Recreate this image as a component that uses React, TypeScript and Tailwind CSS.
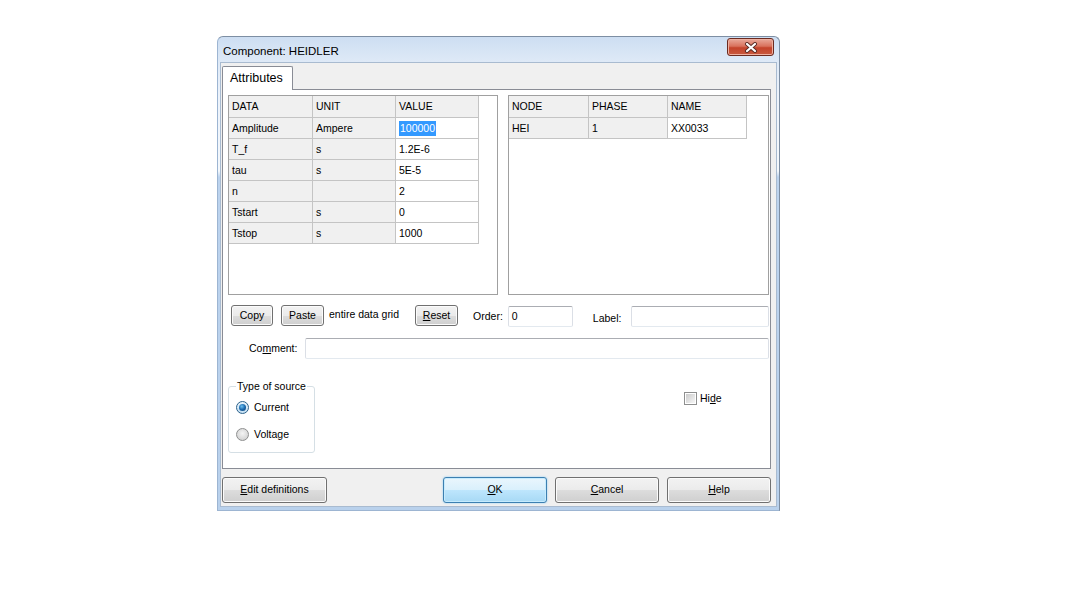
import React from "react";

// Win7 classic button look, reused by every push button in the dialog
const btn =
  "flex items-center justify-center rounded-[3px] border border-[#707070] bg-[linear-gradient(180deg,#f2f2f2_0%,#ebebeb_50%,#dddddd_50%,#cfcfcf_100%)] shadow-[inset_0_0_0_1px_#fbfbfb] text-black";
const btnDefault =
  "flex items-center justify-center rounded-[3px] border border-[#3c7fb1] bg-[linear-gradient(180deg,#eaf6fd_0%,#d9f0fc_50%,#bee6fd_50%,#a7d9f5_100%)] shadow-[inset_0_0_0_1px_#c6ebfd,0_0_2px_#7fc9f5] text-black";
const input =
  "h-[21px] rounded-[2px] border border-[#abadb3] border-x-[#dbdfe6] border-b-[#e3e9ef] bg-white";

const dataRows = [
  ["Amplitude", "Ampere", "100000"],
  ["T_f", "s", "1.2E-6"],
  ["tau", "s", "5E-5"],
  ["n", "", "2"],
  ["Tstart", "s", "0"],
  ["Tstop", "s", "1000"],
];

function Cell({ children, white, head }: { children?: React.ReactNode; white?: boolean; head?: boolean }) {
  const h = head ? "h-[22px]" : "h-[21px]";
  return (
    <div
      className={
        white
          ? `flex ${h} items-center border-r border-b border-[#c4c4c4] bg-white pl-[3px] pt-[1px]`
          : `flex ${h} items-center border-r border-b border-[#c4c4c4] bg-[#f0f0f0] pl-[3px] pt-[1px]`
      }
    >
      {children}
    </div>
  );
}

function CloseGlyph() {
  return (
    <svg width="14" height="11" viewBox="0 0 14 11">
      <path d="M3 2 L11 9 M11 2 L3 9" stroke="#5a2b24" strokeWidth="4" strokeLinecap="round" />
      <path d="M3 2 L11 9 M11 2 L3 9" stroke="#ffffff" strokeWidth="2.2" strokeLinecap="round" />
    </svg>
  );
}

export default function App() {
  return (
    <div className="h-[591px] w-[1081px] bg-white pl-[217px] pt-[36px] font-['Liberation_Sans',Arial,sans-serif] text-[10.5px] text-black">
      {/* window frame */}
      <div className="flex h-[475px] w-[563px] flex-col rounded-t-[6px] border border-[#7d8ea3] border-b-[#9db5d2] border-l-[#9db5d2] bg-[linear-gradient(180deg,#cddef2_0px,#dfeaf7_26px,#edf3fb_60px,#f4f8fc_134px,#bcd3ee_140px,#b9d1ec_100%)] px-[2px] pb-[3px]">
        {/* title bar */}
        <div className="flex h-[25px] items-start justify-between">
          <span className="pl-[3px] pt-[7px] text-[11.5px] leading-[14px]">Component: HEIDLER</span>
          <div className="mr-[3px] mt-[1px] flex h-[18px] w-[47px] items-center justify-center rounded-[3px] border border-[#6b2b20] bg-[linear-gradient(180deg,#e9a99a_0%,#d9725d_45%,#c4432b_55%,#c85a3f_100%)] shadow-[inset_0_0_0_1px_#eeb0a0]">
            <CloseGlyph />
          </div>
        </div>

        {/* client area */}
        <div className="flex flex-1 flex-col border border-[#a9bbd0] bg-[#f0f0f0]">
          {/* tab strip */}
          <div className="ml-[1px] mt-[3px] flex">
            <div className="relative z-10 -mb-px flex h-[24px] w-[71px] items-center rounded-t-[2px] border border-b-0 border-[#898c95] bg-white pl-[7px] text-[12.5px]">
              Attributes
            </div>
          </div>

          {/* tab page */}
          <div className="ml-[1px] flex h-[380px] w-[549px] flex-col border border-[#898c95] bg-white">
            {/* grids */}
            <div className="ml-[5px] mt-[5px] flex gap-[10px]">
              <div className="h-[200px] w-[270px] border border-[#a0a0a0] bg-white">
                <div className="grid w-fit grid-cols-[84px_83px_83px]">
                  <Cell head>DATA</Cell>
                  <Cell head>UNIT</Cell>
                  <Cell head>VALUE</Cell>
                  {dataRows.map((r, i) => (
                    <React.Fragment key={r[0]}>
                      <Cell>{r[0]}</Cell>
                      <Cell>{r[1]}</Cell>
                      <Cell white>
                        {i === 0 ? (
                          <span className="bg-[#3399ff] px-[1px] text-white">{r[2]}</span>
                        ) : (
                          r[2]
                        )}
                      </Cell>
                    </React.Fragment>
                  ))}
                </div>
              </div>
              <div className="h-[200px] w-[261px] border border-[#a0a0a0] bg-white">
                <div className="grid w-fit grid-cols-[80px_79px_79px]">
                  <Cell head>NODE</Cell>
                  <Cell head>PHASE</Cell>
                  <Cell head>NAME</Cell>
                  <Cell>HEI</Cell>
                  <Cell>1</Cell>
                  <Cell white>XX0033</Cell>
                </div>
              </div>
            </div>

            {/* copy / paste / order / label */}
            <div className="ml-[8px] mt-[10px] flex items-start">
              <button className={`${btn} h-[21px] w-[42px]`}>Copy</button>
              <button className={`${btn} ml-[8px] h-[21px] w-[43px]`}>Paste</button>
              <span className="ml-[5px] mt-[2px]">entire data grid</span>
              <button className={`${btn} ml-[16px] h-[21px] w-[43px]`}>
                <span>
                  <u>R</u>eset
                </span>
              </button>
              <span className="ml-[15px] mt-[4px]">Order:</span>
              <div className={`${input} ml-[5px] mt-[1px] flex w-[65px] items-center pl-[3px]`}>0</div>
              <span className="ml-[20px] mt-[6px]">Label:</span>
              <div className={`${input} ml-[10px] mt-[1px] w-[138px]`} />
            </div>

            {/* comment */}
            <div className="ml-[26px] mt-[11px] flex items-center">
              <span>
                Co<u>m</u>ment:
              </span>
              <div className={`${input} ml-[8px] w-[464px]`} />
            </div>

            {/* source type + hide */}
            <div className="ml-[5px] mt-[21px] flex items-start">
              <fieldset className="h-[73px] w-[87px] rounded-[3px] border border-[#d5dfe5] px-[7px]">
                <legend className="px-[1px] leading-[12px]">Type of source</legend>
                <div className="mt-[8px] flex items-center">
                  <span className="flex h-[13px] w-[13px] items-center justify-center rounded-full border border-[#2c628b] bg-[linear-gradient(180deg,#e8f4fc,#c4dff3)]">
                    <span className="h-[7px] w-[7px] rounded-full bg-[radial-gradient(circle_at_40%_35%,#6cc0f0_0%,#1b69ad_50%,#0c3c6d_100%)]" />
                  </span>
                  <span className="ml-[5px]">Current</span>
                </div>
                <div className="mt-[11px] flex items-center">
                  <span className="h-[13px] w-[13px] rounded-full border border-[#8e8f8f] bg-[radial-gradient(circle_at_50%_40%,#f4f4f4_0%,#d6d6d6_70%,#c8c8c8_100%)]" />
                  <span className="ml-[5px]">Voltage</span>
                </div>
              </fieldset>
              <div className="ml-[369px] mt-[11px] flex items-center">
                <span className="flex h-[13px] w-[13px] items-center justify-center border border-[#8e8f8f] bg-white">
                  <span className="h-[9px] w-[9px] bg-[linear-gradient(135deg,#cbcbcb,#f6f6f6)]" />
                </span>
                <span className="ml-[3px]">
                  Hi<u>d</u>e
                </span>
              </div>
            </div>
          </div>

          {/* dialog buttons */}
          <div className="ml-[1px] mt-[8px] flex w-[549px] justify-between">
            <button className={`${btn} h-[26px] w-[105px]`}>
              <span>
                <u>E</u>dit definitions
              </span>
            </button>
            <div className="flex gap-[8px]">
              <button className={`${btnDefault} h-[26px] w-[104px]`}>
                <span>
                  <u>O</u>K
                </span>
              </button>
              <button className={`${btn} h-[26px] w-[104px]`}>
                <span>
                  <u>C</u>ancel
                </span>
              </button>
              <button className={`${btn} h-[26px] w-[104px]`}>
                <span>
                  <u>H</u>elp
                </span>
              </button>
            </div>
          </div>
        </div>
      </div>
    </div>
  );
}
